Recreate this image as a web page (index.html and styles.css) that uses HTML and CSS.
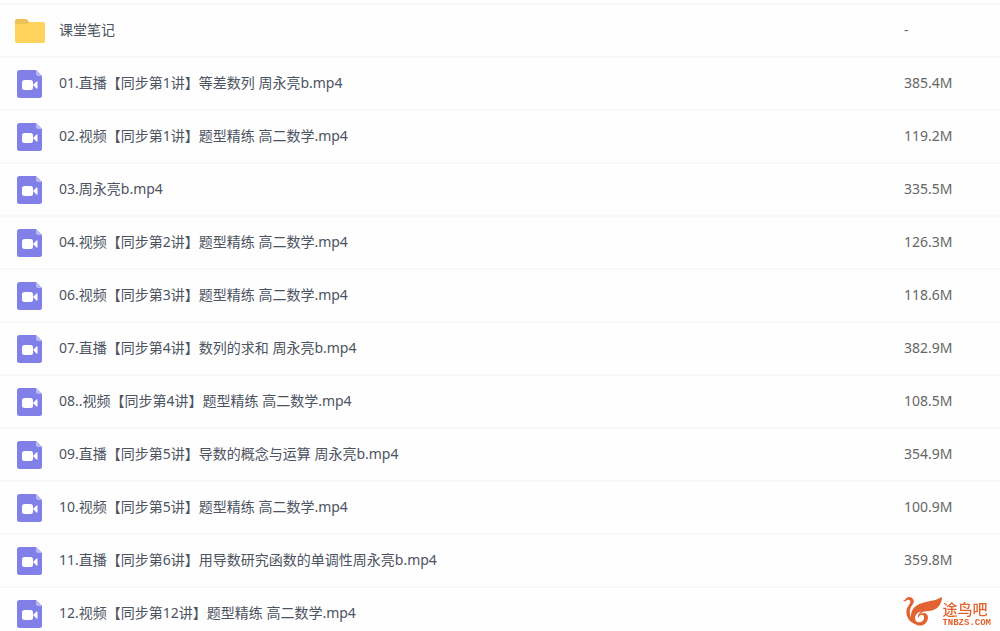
FILE: index.html
```html
<!DOCTYPE html>
<html lang="zh-CN">

<head>
    <meta charset="UTF-8">
    <meta name="viewport" content="width=device-width, initial-scale=1.0">
    <title>课堂笔记</title>
    <link rel="stylesheet" href="styles.css">
</head>

<body>
    <!-- Shared file icon -->
    <svg class="sprite" aria-hidden="true">
        <symbol id="video" viewBox="0 0 26 30">
            <path d="M2.500 1H19L25 7V26.500Q25 29 22.500 29H2.500Q0 29 0 26.500V3.500Q0 1 2.500 1Z" fill="#8080e8" />
            <path d="M19 1L25 7H21Q19 7 19 5Z" fill="#b9b9f3" />
            <rect x="5" y="11" width="11" height="10" rx="2.500" fill="#fff" />
            <path d="M16 16L19.500 12.500Q20.500 12 20.500 13V19Q20.500 20 19.500 19.500Z" fill="#fff" />
        </symbol>
    </svg>

    <table class="files">
        <tbody>
            <tr>
                <td class="icon">
                    <svg class="folder" viewBox="0 0 30 26">
                        <path d="M0 3Q0 1 2 1H10.500Q12 1 12.800 2.200L14 4H27Q30 4 30 7V12H0Z" fill="#ecc256" />
                        <path d="M0 7Q0 6 2 6H12L14 4H28Q30 4 30 6V23Q30 25 28 25H2Q0 25 0 23Z" fill="#ffd35c" />
                    </svg>
                </td>
                <td class="name"><a href="#">课堂笔记</a></td>
                <td class="size">-</td>
            </tr>
            <tr>
                <td class="icon"><svg class="video"><use href="#video" /></svg></td>
                <td class="name"><a href="#">01.直播【同步第1讲】等差数列 周永亮b.mp4</a></td>
                <td class="size">385.4M</td>
            </tr>
            <tr>
                <td class="icon"><svg class="video"><use href="#video" /></svg></td>
                <td class="name"><a href="#">02.视频【同步第1讲】题型精练 高二数学.mp4</a></td>
                <td class="size">119.2M</td>
            </tr>
            <tr>
                <td class="icon"><svg class="video"><use href="#video" /></svg></td>
                <td class="name"><a href="#">03.周永亮b.mp4</a></td>
                <td class="size">335.5M</td>
            </tr>
            <tr>
                <td class="icon"><svg class="video"><use href="#video" /></svg></td>
                <td class="name"><a href="#">04.视频【同步第2讲】题型精练 高二数学.mp4</a></td>
                <td class="size">126.3M</td>
            </tr>
            <tr>
                <td class="icon"><svg class="video"><use href="#video" /></svg></td>
                <td class="name"><a href="#">06.视频【同步第3讲】题型精练 高二数学.mp4</a></td>
                <td class="size">118.6M</td>
            </tr>
            <tr>
                <td class="icon"><svg class="video"><use href="#video" /></svg></td>
                <td class="name"><a href="#">07.直播【同步第4讲】数列的求和 周永亮b.mp4</a></td>
                <td class="size">382.9M</td>
            </tr>
            <tr>
                <td class="icon"><svg class="video"><use href="#video" /></svg></td>
                <td class="name"><a href="#">08..视频【同步第4讲】题型精练 高二数学.mp4</a></td>
                <td class="size">108.5M</td>
            </tr>
            <tr>
                <td class="icon"><svg class="video"><use href="#video" /></svg></td>
                <td class="name"><a href="#">09.直播【同步第5讲】导数的概念与运算 周永亮b.mp4</a></td>
                <td class="size">354.9M</td>
            </tr>
            <tr>
                <td class="icon"><svg class="video"><use href="#video" /></svg></td>
                <td class="name"><a href="#">10.视频【同步第5讲】题型精练 高二数学.mp4</a></td>
                <td class="size">100.9M</td>
            </tr>
            <tr>
                <td class="icon"><svg class="video"><use href="#video" /></svg></td>
                <td class="name"><a href="#">11.直播【同步第6讲】用导数研究函数的单调性周永亮b.mp4</a></td>
                <td class="size">359.8M</td>
            </tr>
            <tr>
                <td class="icon"><svg class="video"><use href="#video" /></svg></td>
                <td class="name"><a href="#">12.视频【同步第12讲】题型精练 高二数学.mp4</a></td>
                <td class="size"></td>
            </tr>
        </tbody>
    </table>

    <!-- Site mark over the list -->
    <div class="watermark">
        <svg class="bird" viewBox="0 0 39 32">
            <path d="M0 5Q2 4 3 2.500Q6 0 9 2Q12 4 10 8Q6 13 7 18Q8 25 15 28Q7 28 4 20Q2 14 6 9Q8 6 7 4.500Q5 3 3 5Q1.500 5.500 0 5Z" fill="#e2632f" />
            <path d="M8 21C8 9 18 7 27 5Q34 4 39 1C39 8 34 15 25 15Q20 15 16 18Q24 15 25 21C25 28 18 32 12 28C8 26 8 23 8 21ZM12 21C12 26 15 27 18 26C21 25 22 21 20 19Q17 18 15 22Q14 19 18 15Q13 17 12 21Z" fill="#e2632f" fill-rule="evenodd" />
        </svg>
        <div class="brand">
            <p class="title">途鸟吧</p>
            <p class="domain">TNBZS.COM</p>
        </div>
    </div>
</body>

</html>
```
FILE: styles.css
```css
* {
    margin: 0;
    padding: 0;
    box-sizing: border-box;
}

body {
    padding-top: 3px;
    background-color: #fefefe;
    color: #4c5361;
    font-family: "Noto Sans", "Noto Sans CJK SC", sans-serif;
    font-size: 14px;
    line-height: 20px;
}

.sprite {
    position: absolute;
    width: 0;
    height: 0;
}

.files {
    width: 100%;
    table-layout: fixed;
    border-collapse: collapse;
}

.files tr {
    height: 53px;
    border-top: 2px solid #f8f8f9;
}

.files tr:hover {
    background-color: #f7f8fd;
}

.files td {
    padding-bottom: 2px;
    vertical-align: middle;
}

.files .icon {
    width: 59px;
    padding-bottom: 0;
    padding-left: 15px;
}

.files svg {
    display: block;
}

.folder {
    width: 30px;
    height: 26px;
}

.video {
    width: 26px;
    height: 30px;
    margin-left: 2px;
}

.name a {
    color: inherit;
    text-decoration: none;
}

.files .size {
    width: 96px;
    color: #666;
}

.watermark {
    position: fixed;
    right: 9px;
    bottom: 3px;
    display: flex;
    align-items: flex-end;
    color: #e2632f;
}

.bird {
    width: 39px;
    height: 32px;
}

.title {
    font-family: "Noto Sans CJK SC", sans-serif;
    font-size: 15px;
    font-weight: 500;
    line-height: 18px;
}

.domain {
    font-family: "Liberation Mono", monospace;
    font-size: 9px;
    font-weight: bold;
    line-height: 10px;
}
```
